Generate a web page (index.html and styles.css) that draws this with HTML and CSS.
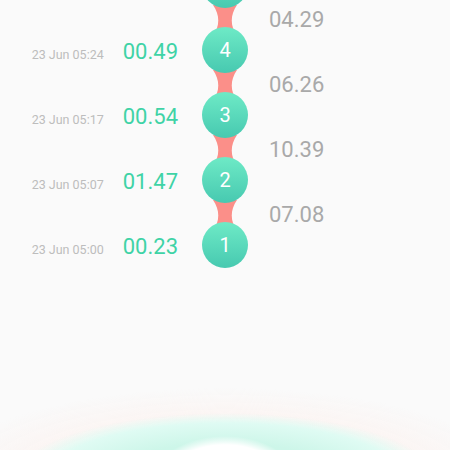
FILE: index.html
```html
<!DOCTYPE html>
<html lang="en">
<head>
  <meta charset="UTF-8" />
  <title>Laps</title>
  <link rel="stylesheet" href="styles.css">
</head>
<body>
  <div id="timeline">

    <div class="lap">
      <div class="lap-info"></div>
      <div class="bubble"></div>
      <div></div>
    </div>

    <div class="split">
      <div></div>
      <div class="link"><svg width="24" height="31" viewBox="0 0 24 31"><path d="M0 0H24C17 10 17 21 24 31H0C7 21 7 10 0 0Z"/></svg></div>
      <div class="split-time">04.29</div>
    </div>

    <div class="lap">
      <div class="lap-info"><span class="lap-date">23 Jun 05:24</span><span class="lap-time">00.49</span></div>
      <div class="bubble">4</div>
      <div></div>
    </div>

    <div class="split">
      <div></div>
      <div class="link"><svg width="24" height="31" viewBox="0 0 24 31"><path d="M0 0H24C17 10 17 21 24 31H0C7 21 7 10 0 0Z"/></svg></div>
      <div class="split-time">06.26</div>
    </div>

    <div class="lap">
      <div class="lap-info"><span class="lap-date">23 Jun 05:17</span><span class="lap-time">00.54</span></div>
      <div class="bubble">3</div>
      <div></div>
    </div>

    <div class="split">
      <div></div>
      <div class="link"><svg width="24" height="31" viewBox="0 0 24 31"><path d="M0 0H24C17 10 17 21 24 31H0C7 21 7 10 0 0Z"/></svg></div>
      <div class="split-time">10.39</div>
    </div>

    <div class="lap">
      <div class="lap-info"><span class="lap-date">23 Jun 05:07</span><span class="lap-time">01.47</span></div>
      <div class="bubble">2</div>
      <div></div>
    </div>

    <div class="split">
      <div></div>
      <div class="link"><svg width="24" height="31" viewBox="0 0 24 31"><path d="M0 0H24C17 10 17 21 24 31H0C7 21 7 10 0 0Z"/></svg></div>
      <div class="split-time">07.08</div>
    </div>

    <div class="lap">
      <div class="lap-info"><span class="lap-date">23 Jun 05:00</span><span class="lap-time">00.23</span></div>
      <div class="bubble">1</div>
      <div></div>
    </div>

  </div>

  <div class="glow"></div>
</body>
</html>
```

FILE: styles.css
```css
html, body {
  margin: 0;
  padding: 0;
  height: 100%;
  font-family: Roboto, 'Noto Sans', sans-serif;
  background: #fafafa;
  overflow: hidden;
}

#timeline {
  margin-top: -38px;
  display: flex;
  flex-direction: column;
}

.lap, .split {
  display: grid;
  grid-template-columns: 178px 46px 1fr;
  column-gap: 24px;
  align-items: center;
}

.lap {
  height: 46px;
}

.split {
  height: 19px;
}

.lap-info {
  display: flex;
  justify-content: flex-end;
  align-items: baseline;
  gap: 19px;
  padding-top: 2px;
}

.lap-date {
  font-size: 12.5px;
  color: #bdbdbd;
}

.lap-time {
  font-size: 22px;
  color: #3fd3a6;
}

.bubble {
  position: relative;
  z-index: 2;
  width: 46px;
  height: 46px;
  border-radius: 50%;
  background: linear-gradient(to bottom, #6eeac6, #47c9b0);
  color: #fff;
  font-size: 20px;
  display: flex;
  align-items: center;
  justify-content: center;
}

.link {
  position: relative;
  z-index: 1;
  height: 19px;
  display: flex;
  justify-content: center;
  align-items: center;
}

.link svg {
  fill: #fb8f89;
  flex-shrink: 0;
}

.split-time {
  margin-left: -3px;
  margin-top: -1px;
  font-size: 22px;
  color: #a9a9a9;
}

.glow {
  position: fixed;
  left: 0;
  right: 0;
  bottom: 0;
  height: 100px;
  background:
    radial-gradient(72px 44px at 225px 130px, #fff 80%, rgba(255,255,255,0) 100%),
    radial-gradient(212px 67px at 225px 130px, #cdf6e9 55%, #dffbf3 85%, rgba(230,250,244,0) 100%),
    radial-gradient(290px 92px at 225px 130px, rgba(252,242,239,0.6) 72%, rgba(250,250,250,0) 100%);
}
```
